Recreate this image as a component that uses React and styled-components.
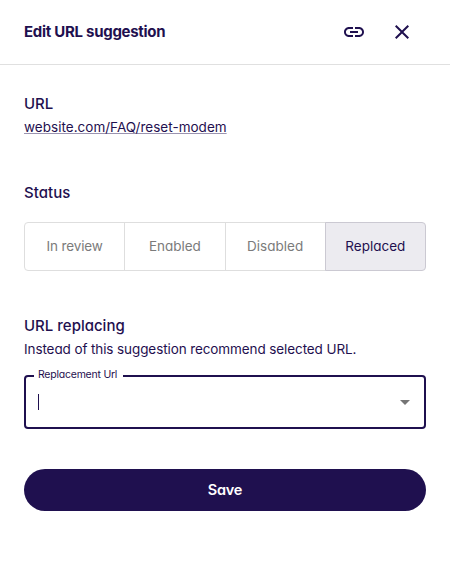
import React from 'react';
import styled, { createGlobalStyle, css } from 'styled-components';

const ink = '#1f104f';

const GlobalStyle = createGlobalStyle`
  *, *::before, *::after { box-sizing: border-box; }
  body {
    margin: 0;
    background: #fff;
    color: ${ink};
    font-family: Inter, "Open Sans", sans-serif;
    font-feature-settings: "cv11" 1;
  }
`;

const Panel = styled.main`
  width: 100%;
  min-height: 569px;
  background: #fff;
`;

const Header = styled.header`
  display: flex;
  align-items: center;
  height: 65px;
  padding: 0 36px 1px 24px;
  border-bottom: 1px solid #e0e0e0;
`;

const Title = styled.h1`
  flex: 1;
  margin: 0;
  font-size: 15px;
  font-weight: 750;
  line-height: 24px;
  letter-spacing: -0.28px;
`;

const Actions = styled.div`
  display: flex;
  gap: 24px;
`;

const IconButton = styled.button`
  display: flex;
  padding: 0;
  border: 0;
  background: none;
  color: ${ink};
`;

const Body = styled.div`
  display: flex;
  flex-direction: column;
  padding: 27px 24px 0;
`;

const Section = styled.section`
  display: flex;
  flex-direction: column;
  align-items: flex-start;
  margin-bottom: ${(p) => p.$gap}px;
`;

const Heading = styled.h2`
  margin: 0;
  font-size: 15px;
  font-weight: 550;
  line-height: 24px;
  letter-spacing: ${(p) => p.$tracking || 0}px;
`;

const Copy = styled.p`
  margin: 0;
  font-size: 13.5px;
  line-height: 23px;
  letter-spacing: -0.1px;
  white-space: nowrap;
`;

const PageLink = styled.a`
  color: ${ink};
  font-size: 13.5px;
  line-height: 23px;
  letter-spacing: 0.02px;
  text-decoration: underline 1px rgba(31, 16, 79, 0.45);
  text-decoration-skip-ink: none;
  text-underline-offset: 1px;
`;

const ToggleGroup = styled.div`
  display: flex;
  width: 100%;
  height: 49px;
  margin-top: 17px;
`;

const Toggle = styled.button`
  flex: 1 1 0;
  margin-left: ${(p) => (p.$first ? 0 : -1)}px;
  padding: 0 0 1px;
  border: 1px solid #dedede;
  border-radius: ${(p) => (p.$first ? '4px 0 0 4px' : '0')};
  background: #fff;
  color: #7b7b7b;
  font: inherit;
  font-feature-settings: inherit;
  font-size: 13.5px;
  letter-spacing: ${(p) => p.$tracking}px;
  ${(p) => p.$selected && css`
    border-color: #cbc9d2;
    border-radius: 0 4px 4px 0;
    background: #ecebf0;
    color: ${ink};
  `}
`;

const Field = styled.div`
  position: relative;
  display: flex;
  align-items: center;
  width: 100%;
  height: 54px;
  margin-top: 14px;
  padding: 0 7px 0 12px;
  border: 2px solid ${ink};
  border-radius: 4px;
`;

const FieldLabel = styled.label`
  position: absolute;
  top: -9px;
  left: 8px;
  width: 89px;
  padding-left: 4px;
  background: #fff;
  font-size: 10.5px;
  line-height: 14px;
  letter-spacing: -0.23px;
  white-space: nowrap;
`;

const Caret = styled.span`
  width: 1px;
  height: 16px;
  background: ${ink};
`;

const Arrow = styled.svg`
  margin-left: auto;
  fill: #757575;
`;

const SaveButton = styled.button`
  height: 42px;
  padding: 0 0 1px;
  border: 0;
  border-radius: 21px;
  background: ${ink};
  color: #fff;
  font: inherit;
  font-feature-settings: inherit;
  font-size: 14.5px;
  font-weight: 600;
  letter-spacing: -0.2px;
`;

const statuses = [
  { name: 'In review', tracking: -0.15 },
  { name: 'Enabled', tracking: -0.05 },
  { name: 'Disabled', tracking: 0 },
  { name: 'Replaced', tracking: 0 },
];

export default function App() {
  return (
    <Panel>
      <GlobalStyle />
      <Header>
        <Title>Edit URL suggestion</Title>
        <Actions>
          <IconButton aria-label="Copy link">
            <svg width="24" height="24" viewBox="0 0 24 24" fill="currentColor">
              <path d="M3.9 12c0-1.71 1.39-3.1 3.1-3.1h4V7H7c-2.76 0-5 2.24-5 5s2.24 5 5 5h4v-1.9H7c-1.71 0-3.1-1.39-3.1-3.1zM8 13h8v-2H8v2zm9-6h-4v1.9h4c1.71 0 3.1 1.39 3.1 3.1s-1.39 3.1-3.1 3.1h-4V17h4c2.76 0 5-2.24 5-5s-2.24-5-5-5z" />
            </svg>
          </IconButton>
          <IconButton aria-label="Close">
            <svg width="24" height="24" viewBox="0 0 24 24" fill="currentColor">
              <path d="M19 6.41L17.59 5 12 10.59 6.41 5 5 6.41 10.59 12 5 17.59 6.41 19 12 13.41 17.59 19 19 17.59 13.41 12z" />
            </svg>
          </IconButton>
        </Actions>
      </Header>
      <Body>
        <Section $gap={42}>
          <Heading>URL</Heading>
          <PageLink>website.com/FAQ/reset-modem</PageLink>
        </Section>
        <Section $gap={43}>
          <Heading $tracking={0.05}>Status</Heading>
          <ToggleGroup>
            {statuses.map((s, i) => (
              <Toggle key={s.name} $first={i === 0} $selected={i === 3} $tracking={s.tracking}>
                {s.name}
              </Toggle>
            ))}
          </ToggleGroup>
        </Section>
        <Section $gap={40}>
          <Heading>URL replacing</Heading>
          <Copy>Instead of this suggestion recommend selected URL.</Copy>
          <Field>
            <FieldLabel>Replacement Url</FieldLabel>
            <Caret />
            <Arrow width="24" height="24" viewBox="0 0 24 24">
              <path d="M7 10l5 5 5-5z" />
            </Arrow>
          </Field>
        </Section>
        <SaveButton>Save</SaveButton>
      </Body>
    </Panel>
  );
}
